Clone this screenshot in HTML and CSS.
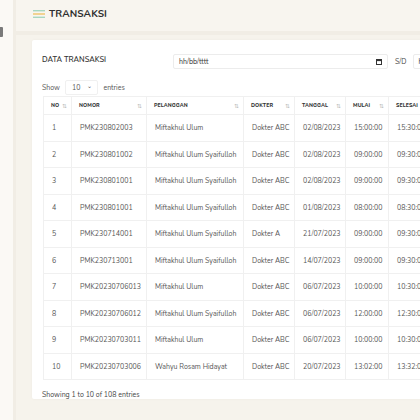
FILE: index.html
```html
<!DOCTYPE html>
<html>
<head>
<meta charset="utf-8">
<link rel="stylesheet" href="styles.css">
</head>
<body>
<div class="app">
  <aside class="sidebar"><span class="logo-frag"></span></aside>
  <main class="main">
    <header class="topbar">
      <svg class="burger" width="12" height="8" viewBox="0 0 12 8">
        <rect x="0" y="0" width="12" height="1.4" fill="#a9d6c0"/>
        <rect x="0" y="3.3" width="12" height="1.4" fill="#f0c36a"/>
        <rect x="0" y="6.6" width="12" height="1.4" fill="#a9d6c0"/>
      </svg>
      <span class="title">TRANSAKSI</span>
    </header>
    <div class="content">
      <section class="card">
        <div class="card-head">
          <div class="card-title">DATA TRANSAKSI</div>
          <div class="filters">
            <div class="date-input long"><span>hh/bb/tttt</span>
              <svg width="6" height="6" viewBox="0 0 6 6"><rect x="0.5" y="0.5" width="5" height="5" fill="none" stroke="#333" stroke-width="1"/><rect x="0.5" y="0.5" width="5" height="1.6" fill="#333"/></svg>
            </div>
            <span class="sd">S/D</span>
            <div class="date-input"><span>hh/bb/tttt</span></div>
          </div>
        </div>
        <div class="length">Show <span class="select">10 <span class="chev">&#8964;</span></span> entries</div>
        <table class="grid">
          <colgroup>
            <col style="width:28px"><col style="width:75px"><col style="width:97px"><col style="width:51px"><col style="width:51px"><col style="width:43px"><col style="width:60px">
          </colgroup>
          <thead>
            <tr>
              <th>NO<i>&#8645;</i></th><th>NOMOR<i>&#8645;</i></th><th>PELANGGAN<i>&#8645;</i></th><th>DOKTER<i>&#8645;</i></th><th>TANGGAL<i>&#8645;</i></th><th>MULAI<i>&#8645;</i></th><th>SELESAI<i>&#8645;</i></th>
            </tr>
          </thead>
          <tbody>
            <tr><td>1</td><td>PMK230802003</td><td>Miftakhul Ulum</td><td>Dokter ABC</td><td>02/08/2023</td><td>15:00:00</td><td>15:30:00</td></tr>
            <tr><td>2</td><td>PMK230801002</td><td>Miftakhul Ulum Syaifulloh</td><td>Dokter ABC</td><td>02/08/2023</td><td>09:00:00</td><td>09:30:00</td></tr>
            <tr><td>3</td><td>PMK230801001</td><td>Miftakhul Ulum Syaifulloh</td><td>Dokter ABC</td><td>02/08/2023</td><td>09:00:00</td><td>09:30:00</td></tr>
            <tr><td>4</td><td>PMK230801001</td><td>Miftakhul Ulum Syaifulloh</td><td>Dokter ABC</td><td>01/08/2023</td><td>08:00:00</td><td>08:30:00</td></tr>
            <tr><td>5</td><td>PMK230714001</td><td>Miftakhul Ulum Syaifulloh</td><td>Dokter A</td><td>21/07/2023</td><td>09:00:00</td><td>09:30:00</td></tr>
            <tr><td>6</td><td>PMK230713001</td><td>Miftakhul Ulum Syaifulloh</td><td>Dokter ABC</td><td>14/07/2023</td><td>09:00:00</td><td>09:30:00</td></tr>
            <tr><td>7</td><td>PMK20230706013</td><td>Miftakhul Ulum</td><td>Dokter ABC</td><td>06/07/2023</td><td>10:00:00</td><td>10:30:00</td></tr>
            <tr><td>8</td><td>PMK20230706012</td><td>Miftakhul Ulum Syaifulloh</td><td>Dokter ABC</td><td>06/07/2023</td><td>12:00:00</td><td>12:30:00</td></tr>
            <tr><td>9</td><td>PMK20230703011</td><td>Miftakhul Ulum</td><td>Dokter ABC</td><td>06/07/2023</td><td>10:00:00</td><td>10:30:00</td></tr>
            <tr><td>10</td><td>PMK20230703006</td><td>Wahyu Rosam Hidayat</td><td>Dokter ABC</td><td>20/07/2023</td><td>13:02:00</td><td>13:32:00</td></tr>
          </tbody>
        </table>
        <div class="info">Showing 1 to 10 of 108 entries</div>
      </section>
    </div>
  </main>
</div>
</body>
</html>
```
FILE: styles.css
```css
html, body {
  margin: 0;
  padding: 0;
  width: 420px;
  height: 420px;
  overflow: hidden;
  font-family: "Nunito", "Lato", "Open Sans", sans-serif;
  color: #444;
}
.app {
  display: flex;
  width: 420px;
  height: 420px;
  background: #f6f3ec;
}
.sidebar {
  width: 13px;
  flex: none;
  background: #fbf9f5;
  border-right: 3px solid #f1ede5;
  position: relative;
}
.logo-frag {
  position: absolute;
  left: 0;
  top: 27px;
  width: 3px;
  height: 10px;
  background: #7a7a7a;
  border-radius: 0 1px 1px 0;
}
.main {
  flex: 1;
  min-width: 0;
  display: flex;
  flex-direction: column;
}
.topbar {
  flex: none;
  display: flex;
  align-items: center;
  padding-left: 17px;
  gap: 4px;
  background: #f8f5ef;
  border-bottom: 4px solid #f1ede5;
  box-sizing: border-box;
  height: 35px;
  padding-bottom: 4px;
}
.title {
  font-weight: 700;
  font-size: 10px;
  color: #2e2e2e;
  letter-spacing: 0.1px;
}
.content {
  padding: 5px 0 0 16px;
}
.card {
  width: 440px;
  background: #fff;
  border-radius: 2px;
  box-shadow: 0 0 3px rgba(0,0,0,0.04);
  padding: 13px 0 0 10px;
  height: 359px;
  box-sizing: border-box;
}
.card-head {
  display: flex;
  align-items: center;
  height: 17px;
}
.card-title {
  font-size: 7.5px;
  font-weight: 600;
  color: #333;
  width: 131px;
  margin-top: -4px;
}
.filters {
  display: flex;
  align-items: center;
}
.date-input {
  height: 15px;
  box-sizing: border-box;
  border: 1px solid #ececec;
  border-radius: 2px;
  display: flex;
  align-items: center;
  justify-content: space-between;
  padding: 0 5px 0 5px;
  font-size: 7px;
  color: #333;
  width: 40px;
}
.date-input.long {
  width: 215px;
}
.sd {
  font-size: 7px;
  color: #444;
  margin: 0 6px 0 7px;
}
.length {
  font-size: 7px;
  color: #555;
  margin-top: 10px;
  display: flex;
  align-items: center;
  height: 15px;
}
.select {
  display: inline-flex;
  align-items: center;
  gap: 7px;
  height: 15px;
  padding: 0 5px 0 6px;
  margin: 0 5px;
  border: 1px solid #f0f0f0;
  border-radius: 2px;
  box-sizing: border-box;
}
.chev {
  font-size: 6px;
  margin-top: -3px;
}
.grid {
  margin-top: 1px;
  margin-left: 1px;
  border-collapse: collapse;
  table-layout: fixed;
  width: 405px;
}
.grid th, .grid td {
  border: 1px solid #f0f0f0;
  text-align: left;
  white-space: nowrap;
  overflow: hidden;
}
.grid th {
  font-size: 5.2px;
  font-weight: 800;
  color: #333;
  height: 17px;
  padding: 0 4px 0 7px;
  position: relative;
  letter-spacing: 0.1px;
}
.grid th i {
  font-style: normal;
  font-weight: 400;
  color: #bbb;
  font-size: 5.5px;
  position: absolute;
  right: 4px;
  top: 5px;
}
.grid td {
  font-size: 7px;
  color: #555;
  height: 25.5px;
  padding: 0 0 0 8px;
}
.info {
  font-size: 7px;
  color: #444;
  margin-top: 10px;
}
```
